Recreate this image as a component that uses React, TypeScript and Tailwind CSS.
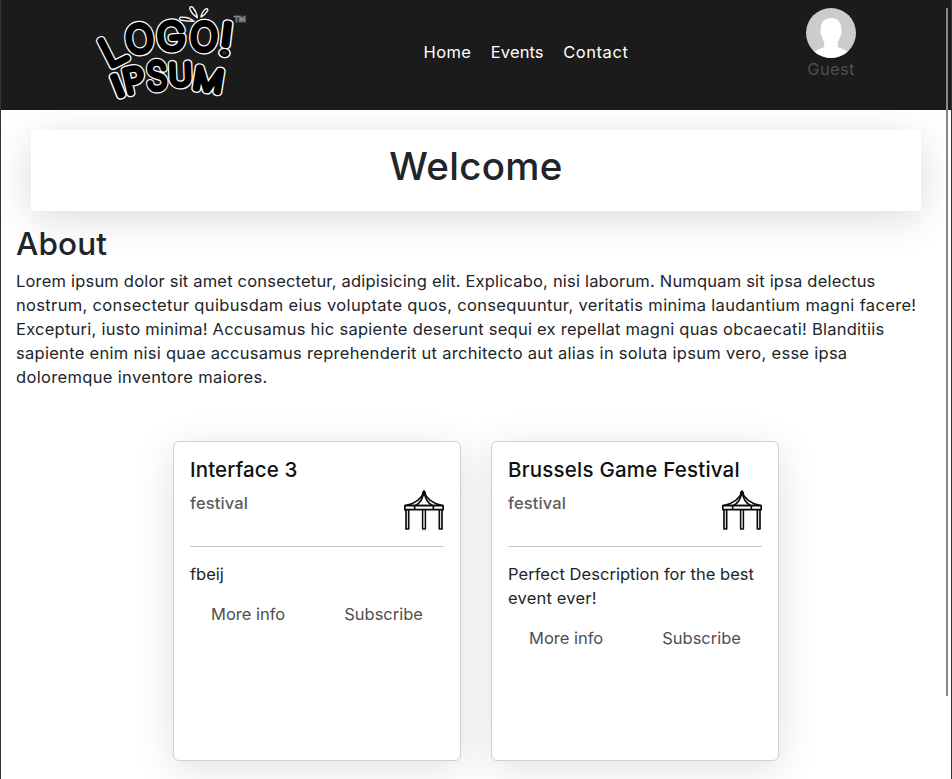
import React from "react";

type Glyph = { ch: string; x: number; y: number; rot: number; sx: number; size: number };

const glyphs: Glyph[] = [
  { ch: "L", x: 83, y: 150, rot: -27, sx: 1.05, size: 116 },
  { ch: "O", x: 163, y: 116, rot: -8, sx: 1, size: 110 },
  { ch: "G", x: 259, y: 108, rot: -4, sx: 1.04, size: 109 },
  { ch: "O", x: 357, y: 110, rot: 4, sx: 0.98, size: 110 },
  { ch: "!", x: 423, y: 116, rot: 7, sx: 1.2, size: 126 },
  { ch: "I", x: 98, y: 257, rot: -22, sx: 1.2, size: 84 },
  { ch: "P", x: 147, y: 240, rot: -13, sx: 1.05, size: 98 },
  { ch: "S", x: 216, y: 227, rot: -3, sx: 0.9, size: 110 },
  { ch: "U", x: 286, y: 223, rot: -2, sx: 1.04, size: 88 },
  { ch: "M", x: 370, y: 239, rot: 9, sx: 1.12, size: 88 },
];

function Logo() {
  return (
    <svg viewBox="0 0 525 330" className="h-[110px] w-[175px] shrink-0" role="img" aria-label="Logo Ipsum">
      {glyphs.map((g, i) => (
        <g
          key={i}
          transform={`translate(${g.x} ${g.y}) rotate(${g.rot}) scale(${g.sx} 1)`}
          fontFamily="Inter, sans-serif"
          fontWeight={100}
          fontSize={g.size}
          textAnchor="middle"
          strokeLinejoin="round"
        >
          <text y={g.size * 0.364} fill="#fff" stroke="#fff" strokeWidth={25}>{g.ch}</text>
          <text y={g.size * 0.364} fill="#000" stroke="#000" strokeWidth={17.5} aria-hidden="true">{g.ch}</text>
        </g>
      ))}
      <g fill="#000" stroke="#eee" strokeWidth="4.5" strokeLinejoin="round">
        <path d="M286 52 Q310 49 327 64 Q306 64 286 60 Q281 56 286 52Z" />
        <path d="M314 24 Q317 17 324 23 Q335 36 337 53 Q318 40 314 24Z" />
        <path d="M348 51 Q350 37 362 27 Q369 24 368 32 Q361 44 348 51Z" />
      </g>
      <text x="447" y="67" fill="none" stroke="#aaa" strokeWidth="1.8" fontFamily="Inter, sans-serif" fontWeight={700} fontSize="22" textLength="35">TM</text>
    </svg>
  );
}

function Tent() {
  return (
    <svg viewBox="0 0 120 120" className="size-10" fill="none" stroke="#0a0a0a" strokeWidth="5" strokeLinejoin="round">
      <path d="M6 58V117H14V58M56 58V117H64V58M106 58V117H114V58" />
      <path d="M58 61h4v54h-4z" fill="#bbb" stroke="none" />
      <path d="M60 6Q48 38 4 47H116Q72 38 60 6Z" fill="#fff" />
      <path d="M58 10Q56 34 34 47M62 10Q64 34 86 47" />
      <path d="M2.5 47H117.5V59H2.5ZM32 47V59M88 47V59" fill="#fff" />
      <path d="M60 3L56 9L60 15L64 9Z" fill="#111" />
    </svg>
  );
}

type CardProps = { title: React.ReactNode; children: React.ReactNode };

function EventCard({ title, children }: CardProps) {
  return (
    <article className="h-80 w-72 rounded-md border border-[#cfcfcf] bg-white px-4 pt-4 shadow-[0_8px_40px_rgba(0,0,0,0.12)]">
      <h5 className="h-6 text-[20.5px] leading-6 font-medium whitespace-nowrap text-[#111]">{title}</h5>
      <div className="mt-2 flex h-10 justify-between">
        <h6 className="pt-[3px] text-[16.5px] leading-5 font-medium tracking-[0.13px] text-[#5c5c5c]">festival</h6>
        <Tent />
      </div>
      <hr className="mt-4 border-[#c7c7c8]" />
      <p className="mt-[15px] text-[16.5px] leading-6 whitespace-nowrap">{children}</p>
      <div className="mt-4 flex h-6 justify-between px-[21px] text-[16.5px] leading-6 text-[#4f4f4f]">
        <a>More info</a>
        <a>Subscribe</a>
      </div>
    </article>
  );
}

export default function App() {
  return (
    <div className="relative h-[779px] w-[952px] overflow-hidden border-x border-[#333] bg-white font-[Inter,sans-serif] text-[#212529]">
      <header className="relative z-10 flex h-[110px] bg-[#1b1b1b]">
        <div className="w-[422.5px] pl-[84px]">
          <Logo />
        </div>
        <nav className="flex w-[382.5px] gap-[19.5px] pt-10 text-[16.5px] leading-6 text-white">
          <a className="tracking-[0.4px]">Home</a>
          <a className="tracking-[0.1px]">Events</a>
          <a className="tracking-[0.57px]">Contact</a>
        </nav>
        <div className="flex w-[50px] flex-col items-center pt-2">
          <svg viewBox="0 0 150 150" className="size-[50px] rounded-full">
            <rect width="150" height="150" fill="#ccc" />
            <path d="M22 132Q35 124 55 117L54 101Q49 94 47 84Q42 79 44 70Q42 31 75 30Q108 31 106 70Q108 79 103 84Q101 94 96 101L95 117Q115 124 128 132V150H22Z" fill="#fff" />
          </svg>
          <span className="-mt-px text-[16.5px] leading-6 tracking-[0.3px] text-[#4f4f4f]">Guest</span>
        </div>
      </header>
      <section className="mx-[30px] mt-5 h-[81px] w-[890px] bg-white pt-3 text-center shadow-[0_8px_40px_rgba(0,0,0,0.14)]">
        <h1 className="text-[38.5px] leading-[48px] font-medium tracking-[0.3px]">Welcome</h1>
      </section>
      <section className="relative px-[15px] pt-4">
        <h2 className="text-[31.5px] leading-[34px] font-medium tracking-[0.1px]">About</h2>
        <p className="mt-2 text-[16.5px] leading-6 whitespace-nowrap">
          <span className="block tracking-[0.193px]">Lorem ipsum dolor sit amet consectetur, adipisicing elit. Explicabo, nisi laborum. Numquam sit ipsa delectus</span>
          <span className="block tracking-[0.338px]">nostrum, consectetur quibusdam eius voluptate quos, consequuntur, veritatis minima laudantium magni facere!</span>
          <span className="block tracking-[0.252px]">Excepturi, iusto minima! Accusamus hic sapiente deserunt sequi ex repellat magni quas obcaecati! Blanditiis</span>
          <span className="block tracking-[0.286px]">sapiente enim nisi quae accusamus reprehenderit ut architecto aut alias in soluta ipsum vero, esse ipsa</span>
          <span className="block tracking-[0.34px]">doloremque inventore maiores.</span>
        </p>
      </section>
      <main className="mt-[52px] flex justify-center gap-[30px]">
        <EventCard title={<span className="tracking-[0.11px]">Interface 3</span>}>
          <span>fbeij</span>
        </EventCard>
        <EventCard title={<span className="tracking-[0.21px]">Brussels Game Festival</span>}>
          <span className="block tracking-[0.04px]">Perfect Description for the best</span>
          <span className="block tracking-[0.2px]">event ever!</span>
        </EventCard>
      </main>
      <div className="absolute top-2 right-[3px] z-20 h-[688px] w-[2px] bg-[#888]" />
    </div>
  );
}
